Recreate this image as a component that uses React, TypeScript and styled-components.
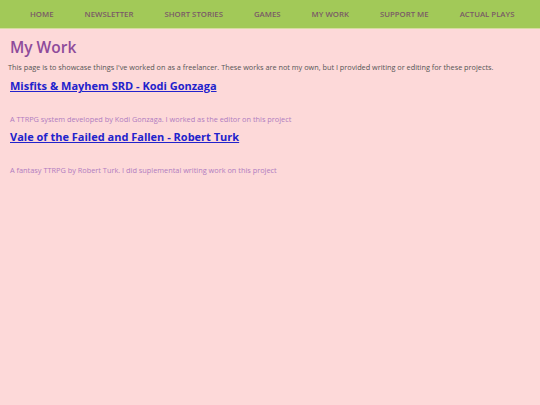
import styled, { createGlobalStyle } from "styled-components";

const GlobalStyle = createGlobalStyle`
  html, body {
    margin: 0;
    padding: 0;
    background: #fdd9d9;
    font-family: "Open Sans", "Lato", sans-serif;
  }
`;

const navItems = [
  "Home",
  "Newsletter",
  "Short Stories",
  "Games",
  "My Work",
  "Support Me",
  "Actual Plays",
];

const projects = [
  {
    title: "Misfits & Mayhem SRD - Kodi Gonzaga",
    blurb:
      "A TTRPG system developed by Kodi Gonzaga. I worked as the editor on this project",
  },
  {
    title: "Vale of the Failed and Fallen - Robert Turk",
    blurb:
      "A fantasy TTRPG by Robert Turk. I did suplemental writing work on this project",
  },
];

const App = () => {
  return (
    <Page>
      <GlobalStyle />
      <NavBar>
        {navItems.map((item) => (
          <NavLink key={item} href="#">
            {item}
          </NavLink>
        ))}
      </NavBar>
      <Main>
        <Title>My Work</Title>
        <Intro>
          This page is to showcase things I've worked on as a freelancer. These
          works are not my own, but I provided writing or editing for these
          projects.
        </Intro>
        {projects.map((p) => (
          <Project key={p.title}>
            <ProjectLink href="#">{p.title}</ProjectLink>
            <Blurb>{p.blurb}</Blurb>
          </Project>
        ))}
      </Main>
    </Page>
  );
};

export default App;

const Page = styled.div`
  min-height: 405px;
  background: #fdd9d9;
`;

const NavBar = styled.nav`
  height: 28px;
  background: #a2c958;
  border-bottom: 1px solid #d6dca0;
  display: flex;
  align-items: center;
  padding-left: 30px;
  gap: 31px;
`;

const NavLink = styled.a`
  font-size: 7.8px;
  font-weight: 600;
  text-transform: uppercase;
  color: #7a5a66;
  text-decoration: none;
`;

const Main = styled.main`
  padding: 10px 8px;
  display: flex;
  flex-direction: column;
`;

const Title = styled.h1`
  margin: 0 0 0 2px;
  font-size: 15.5px;
  font-weight: 600;
  color: #8e4b9b;
  line-height: 16px;
`;

const Intro = styled.p`
  margin: 8px 0 0;
  font-size: 7.3px;
  color: #555;
  line-height: 9px;
`;

const Project = styled.section`
  display: flex;
  flex-direction: column;
  padding-left: 2px;
`;

const ProjectLink = styled.a`
  margin-top: 7px;
  font-size: 11px;
  font-weight: 700;
  color: #2222cc;
  text-decoration: underline;
  line-height: 14px;
`;

const Blurb = styled.p`
  margin: 22px 0 0;
  font-size: 7.35px;
  color: #b07cc0;
  line-height: 8px;
`;
